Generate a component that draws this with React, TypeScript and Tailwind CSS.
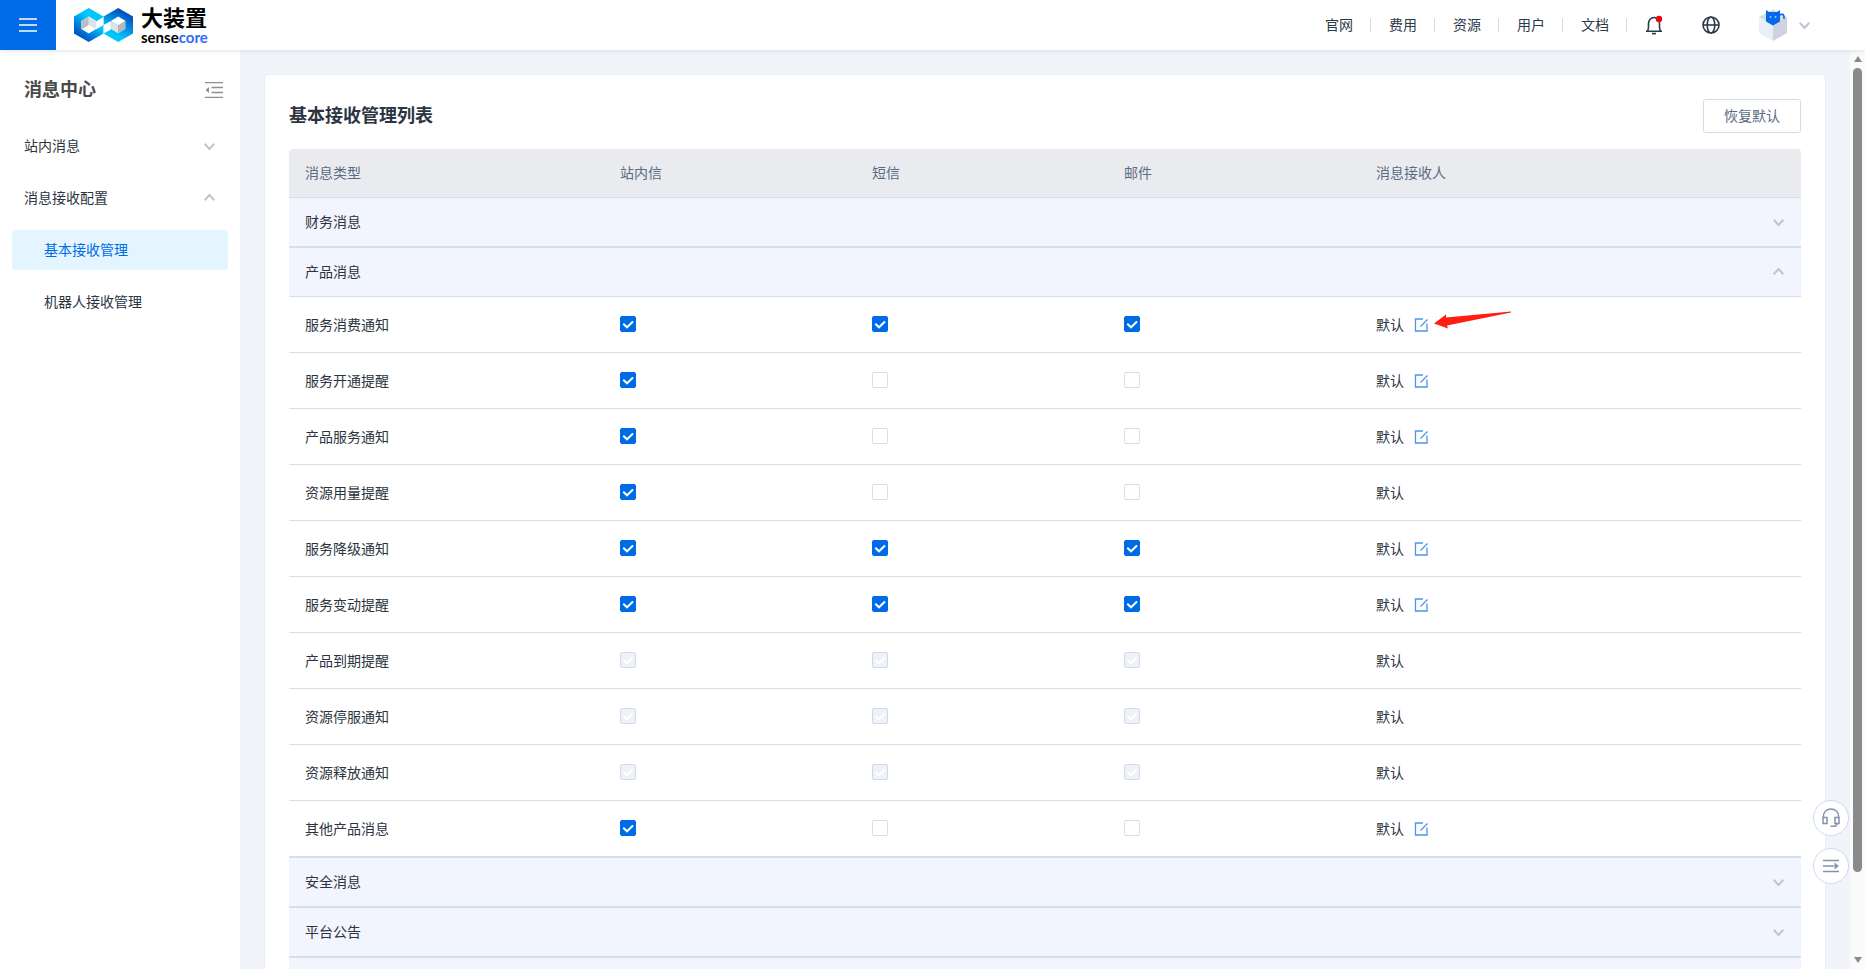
import React, { useState } from 'react';
import clsx from 'clsx';

type Channel = 'site' | 'sms' | 'mail';

interface NoticeRow {
  id: string;
  name: string;
  checked: Channel[];
  disabled?: boolean;
  editable?: boolean;
}

interface NoticeGroup {
  id: string;
  name: string;
  rows: NoticeRow[];
}

const ALL: Channel[] = ['site', 'sms', 'mail'];

const channelLabels: Record<Channel, string> = {
  site: '站内信',
  sms: '短信',
  mail: '邮件',
};

const navLinks = ['官网', '费用', '资源', '用户', '文档'];

const groups: NoticeGroup[] = [
  { id: 'finance', name: '财务消息', rows: [] },
  {
    id: 'product',
    name: '产品消息',
    rows: [
      { id: 'consume', name: '服务消费通知', checked: ALL, editable: true },
      { id: 'open', name: '服务开通提醒', checked: ['site'], editable: true },
      { id: 'service', name: '产品服务通知', checked: ['site'], editable: true },
      { id: 'usage', name: '资源用量提醒', checked: ['site'] },
      { id: 'downgrade', name: '服务降级通知', checked: ALL, editable: true },
      { id: 'change', name: '服务变动提醒', checked: ALL, editable: true },
      { id: 'expire', name: '产品到期提醒', checked: ALL, disabled: true },
      { id: 'stop', name: '资源停服通知', checked: ALL, disabled: true },
      { id: 'release', name: '资源释放通知', checked: ALL, disabled: true },
      { id: 'other', name: '其他产品消息', checked: ['site'], editable: true },
    ],
  },
  { id: 'security', name: '安全消息', rows: [] },
  { id: 'platform', name: '平台公告', rows: [] },
];

const Chevron = ({ up }: { up?: boolean }) => (
  <svg viewBox="0 0 12 10" fill="none" stroke="#bcc5d3" strokeWidth="2" className="h-2.5 w-3">
    <path d={up ? 'M.7 7.2 5.5 2 10.3 7.2' : 'M.7 2.8 5.5 8 10.3 2.8'} />
  </svg>
);

const LogoMark = () => (
  <svg viewBox="0 0 60 34" className="h-[34px] w-[59px]" preserveAspectRatio="none">
    <defs>
      <linearGradient id="logoLeft" x1="0.8" y1="0.1" x2="0.2" y2="1">
        <stop offset="0.3" stopColor="#00c8ff" />
        <stop offset="1" stopColor="#0038b8" />
      </linearGradient>
      <linearGradient id="logoRight" x1="0.8" y1="0" x2="0.3" y2="1">
        <stop offset="0" stopColor="#0038b0" />
        <stop offset="0.8" stopColor="#00c8ff" />
      </linearGradient>
    </defs>
    <path d="M15 0 30 8.5v17L15 34 0 25.5v-17z" fill="url(#logoLeft)" />
    <path d="M45 0 60 8.5v17L45 34 30 25.5v-17z" fill="url(#logoRight)" />
    <path d="M15 8.5 22.5 13v8L15 25.5 7.5 21v-8z" fill="#fff" />
    <path d="M15 8.5v8.500L7.500 21.500V13z" fill="#b9bec3" />
    <path d="M15 8.5v8.500l7.500 4V13z" fill="#dfe2e4" />
    <path d="M22.500 13.500 30 9v8l-7.500 4.500z" fill="#fff" />
    <path d="M30 17l7.500-4v8.500L30 25.500z" fill="#fff" />
    <path d="M45 8.500 52.500 13 45 17.500 37.500 13z" fill="#fff" />
    <path d="M37.500 13 45 17.500V25.500L37.500 21z" fill="#dfe2e4" />
    <path d="M52.500 13 45 17.500V25.500L52.500 21z" fill="#b4b9bd" />
  </svg>
);

const BellIcon = () => (
  <svg viewBox="0 0 18 20" className="h-5 w-[18px]" fill="none" stroke="#2b3a4a" strokeWidth="1.6">
    <path d="M1 16.200h16M2.500 16q1-1.500 1-4V8.500a5.500 6 0 0 1 11 0V12q0 2.500 1 4" />
    <path d="M7 18.600h4" />
    <circle cx="14" cy="4" r="3.200" fill="#f5000a" stroke="none" />
  </svg>
);

const GlobeIcon = () => (
  <svg viewBox="0 0 18 18" className="h-[18px] w-[18px]" fill="none" stroke="#2b3a4a" strokeWidth="1.6">
    <circle cx="9" cy="9" r="8" />
    <ellipse cx="9" cy="9" rx="3.800" ry="8" />
    <path d="M1 9h16" />
  </svg>
);

const Avatar = () => (
  <svg viewBox="0 0 28 32" className="h-8 w-7">
    <path d="M14 .5 28 8 14 16 0 8z" fill="#d5dae2" />
    <path d="M0 8 14 16V32L0 24z" fill="#e9eff8" />
    <path d="M28 8 14 16V32L28 24z" fill="#cdd4df" />
    <path d="M7 1l3 2h8l3-2v11.500l-7 4-7-4z" fill="#0668e8" />
    <path d="M20.500 6q4-2 4.500 1.500V10" fill="none" stroke="#0668e8" strokeWidth="1.600" />
    <circle cx="11.500" cy="8" r="1" fill="#7fd0ff" />
    <circle cx="16.500" cy="8" r="1" fill="#7fd0ff" />
  </svg>
);

const CollapseIcon = () => (
  <svg viewBox="0 0 18 16" className="h-4 w-[18px]" fill="none" stroke="#8f8f8f" strokeWidth="1.3">
    <path d="M0 .7h18M6.500 5.500h11.500M6.500 10.500h11.500M0 15.300h18" />
    <path d="M4 5v6L.5 8z" fill="#8f8f8f" stroke="none" />
  </svg>
);

const EditIcon = () => (
  <svg viewBox="0 0 14 14" className="h-3.5 w-3.5" fill="none" stroke="#4a94ee" strokeWidth="1.3">
    <path d="M9 1H1.500v12H13V5.500" />
    <path d="M6.500 8.500 13.500 1.500" />
  </svg>
);

const HeadsetIcon = () => (
  <svg viewBox="0 0 18 20" className="h-5 w-[18px]" fill="none" stroke="#8592ad" strokeWidth="1.5">
    <path d="M1.500 10V8a7.500 7 0 0 1 15 0v2" />
    <path d="M1 9.500h4v6H1zM13 9.500h4v6h-4zM15 15.500q0 2.700-3 2.700H8.500" />
  </svg>
);

const ExpandIcon = () => (
  <svg viewBox="0 0 18 14" className="h-3.5 w-[18px]" fill="none" stroke="#8592ad" strokeWidth="1.5">
    <path d="M1 1.500h16M1 7h11M1 12.500h16" />
    <path d="M12.500 3.500 17 7l-4.500 3.500z" fill="#8592ad" stroke="none" />
  </svg>
);

const TopBar = () => (
  <header className="relative z-10 flex h-[50px] shrink-0 items-center bg-white shadow-[0_1px_5px_rgba(60,100,180,0.18)]">
    <button aria-label="菜单" className="flex h-full w-14 items-center justify-center bg-[#006be6]">
      <svg viewBox="0 0 18 14" className="h-3.5 w-[18px]" stroke="#fff" strokeWidth="1.5">
        <path d="M0 1h18M0 7h18M0 13h18" />
      </svg>
    </button>
    <a href="#" className="ml-[18px] flex items-center gap-2">
      <LogoMark />
      <span className="flex flex-col font-[Lato,'Noto_Sans_CJK_SC',sans-serif] text-black">
        <span className="text-[22px] leading-6 font-bold">大装置</span>
        <span className="text-[15px] leading-[14px] font-bold">
          sense<span className="text-[#2f6bff]">core</span>
        </span>
      </span>
    </a>
    <nav className="ml-auto flex items-center text-[#2b3a4a]">
      {navLinks.map((link) => (
        <React.Fragment key={link}>
          <a href="#" className="pr-[17px] pl-[18px]">{link}</a>
          <span className="h-3.5 w-px bg-[#d3deec]" />
        </React.Fragment>
      ))}
    </nav>
    <div className="flex items-center pr-[54px]">
      <button aria-label="通知" className="ml-[18px]"><BellIcon /></button>
      <button aria-label="语言" className="ml-[39px]"><GlobeIcon /></button>
      <button aria-label="账号" className="ml-[39px] flex items-center gap-3">
        <Avatar />
        <Chevron />
      </button>
    </div>
  </header>
);

const SideBar = () => (
  <aside className="w-60 shrink-0 bg-white px-3 pt-5 text-[#2b3440]">
    <div className="flex h-10 items-center justify-between pr-[5px] pl-3">
      <h2 className="text-lg font-bold text-[#4a4a4a]">消息中心</h2>
      <button aria-label="收起"><CollapseIcon /></button>
    </div>
    <nav className="mt-4 flex flex-col gap-3">
      <button className="flex h-10 items-center justify-between px-3">
        站内消息
        <Chevron />
      </button>
      <button className="flex h-10 items-center justify-between px-3">
        消息接收配置
        <Chevron up />
      </button>
      <a href="#" className="flex h-10 items-center rounded bg-[#e4f5ff] pl-8 text-[#006be6]">基本接收管理</a>
      <a href="#" className="flex h-10 items-center pl-8">机器人接收管理</a>
    </nav>
  </aside>
);

interface CheckBoxProps {
  label: string;
  defaultChecked: boolean;
  disabled?: boolean;
}

const CheckBox = ({ label, defaultChecked, disabled }: CheckBoxProps) => (
  <label className="grid size-4">
    <input
      type="checkbox"
      aria-label={label}
      defaultChecked={defaultChecked}
      disabled={disabled}
      className={clsx(
        'peer col-start-1 row-start-1 size-4 appearance-none rounded-xs border',
        disabled
          ? 'border-[#cfdbed] bg-[#eef2f8]'
          : 'border-[#d3deee] bg-white checked:border-[#006be6] checked:bg-[#006be6]'
      )}
    />
    <svg
      viewBox="0 0 16 16"
      className="pointer-events-none invisible col-start-1 row-start-1 size-4 peer-checked:visible"
      fill="none"
      stroke="#fff"
      strokeWidth="2"
    >
      <path d="M3.300 7.700 7 11.300 13 5.500" />
    </svg>
  </label>
);

// Red marker pointing at the edit button
const PointerArrow = () => (
  <span className="relative h-0 w-0">
    <svg viewBox="0 0 78 18" className="absolute -top-3.5 -left-1 h-[18px] w-[78px] max-w-none" fill="#ff1f10">
      <path d="M0 12.500 12 3.500V6.500L77 .5 77 1.500 13 14.500 14 17.500z" />
    </svg>
  </span>
);

const ReceiveTable = () => {
  const [openGroup, setOpenGroup] = useState('product');

  return (
    <table className="w-full table-fixed border-separate border-spacing-0 text-left">
      <colgroup>
        <col className="w-5/24" />
        <col className="w-4/24" />
        <col className="w-4/24" />
        <col className="w-4/24" />
        <col className="w-7/24" />
      </colgroup>
      <thead>
        <tr className="h-12 text-[#5a6b84]">
          <th className="rounded-tl bg-[#eaebef] px-4 font-normal">消息类型</th>
          {ALL.map((channel) => (
            <th key={channel} className="bg-[#eaebef] px-4 font-normal">{channelLabels[channel]}</th>
          ))}
          <th className="rounded-tr bg-[#eaebef] px-4 font-normal">消息接收人</th>
        </tr>
      </thead>
      {groups.map((group) => {
        const open = group.id === openGroup;
        return (
          <tbody key={group.id}>
            <tr>
              <td colSpan={5} className="border-y border-[#d3deee] bg-[#f2f5fd] p-0">
                <button
                  aria-expanded={open}
                  onClick={() => setOpenGroup(open ? '' : group.id)}
                  className="flex h-12 w-full items-center justify-between px-4"
                >
                  {group.name}
                  <Chevron up={open} />
                </button>
              </td>
            </tr>
            {open && group.rows.map((row) => (
              <tr key={row.id} className="h-14">
                <td className="border-b border-[#d3deee] px-4">{row.name}</td>
                {ALL.map((channel) => (
                  <td key={channel} className="border-b border-[#d3deee] px-4 pb-px">
                    <CheckBox
                      label={`${row.name} ${channelLabels[channel]}`}
                      defaultChecked={row.checked.includes(channel)}
                      disabled={row.disabled}
                    />
                  </td>
                ))}
                <td className="border-b border-[#d3deee] px-4">
                  <div className="flex items-center gap-2.5">
                    默认
                    {row.editable && (
                      <button aria-label={`编辑${row.name}接收人`}><EditIcon /></button>
                    )}
                    {row.id === 'consume' && <PointerArrow />}
                  </div>
                </td>
              </tr>
            ))}
          </tbody>
        );
      })}
      <tfoot>
        <tr className="h-12">
          <td colSpan={5} className="border-y border-[#d3deee] bg-[#f2f5fd]" />
        </tr>
      </tfoot>
    </table>
  );
};

const ScrollBar = () => (
  <div aria-hidden="true" className="flex w-[15px] shrink-0 flex-col items-center bg-[#fafafa]">
    <svg viewBox="0 0 8 6" className="my-1.5 h-1.5 w-2 shrink-0" fill="#8a8a8a"><path d="M4 0 8 6H0z" /></svg>
    <div className="w-full flex-1 px-[3px]">
      <div className="h-[91%] rounded-full bg-[#8a8a8a]" />
    </div>
    <svg viewBox="0 0 8 6" className="my-1.5 h-1.5 w-2 shrink-0" fill="#8a8a8a"><path d="M0 0H8L4 6z" /></svg>
  </div>
);

export default function App() {
  return (
    <div className="flex h-screen flex-col overflow-hidden bg-[#f1f5f9] font-['Liberation_Sans','Noto_Sans_CJK_SC',sans-serif] text-sm text-[#2b3440]">
      <TopBar />
      <div className="flex min-h-0 flex-1">
        <SideBar />
        <main className="min-w-0 flex-1 overflow-hidden px-[25px] pt-[25px]">
          <section className="rounded bg-white p-6 shadow-[0_0_1px_1px_#e8edfb]">
            <div className="mb-4 flex items-center justify-between">
              <h1 className="text-lg font-bold">基本接收管理列表</h1>
              <button className="h-[34px] rounded-[3px] border border-[#cfdcec] px-5 text-[#5a6b84]">恢复默认</button>
            </div>
            <ReceiveTable />
          </section>
        </main>
        <ScrollBar />
      </div>
      <div className="fixed right-4 bottom-[85px] z-20 flex flex-col gap-3">
        <button aria-label="客服" className="flex size-9 items-center justify-center rounded-full border border-[#cbd8ec] bg-white">
          <HeadsetIcon />
        </button>
        <button aria-label="展开" className="flex size-9 items-center justify-center rounded-full border border-[#cbd8ec] bg-white">
          <ExpandIcon />
        </button>
      </div>
    </div>
  );
}
